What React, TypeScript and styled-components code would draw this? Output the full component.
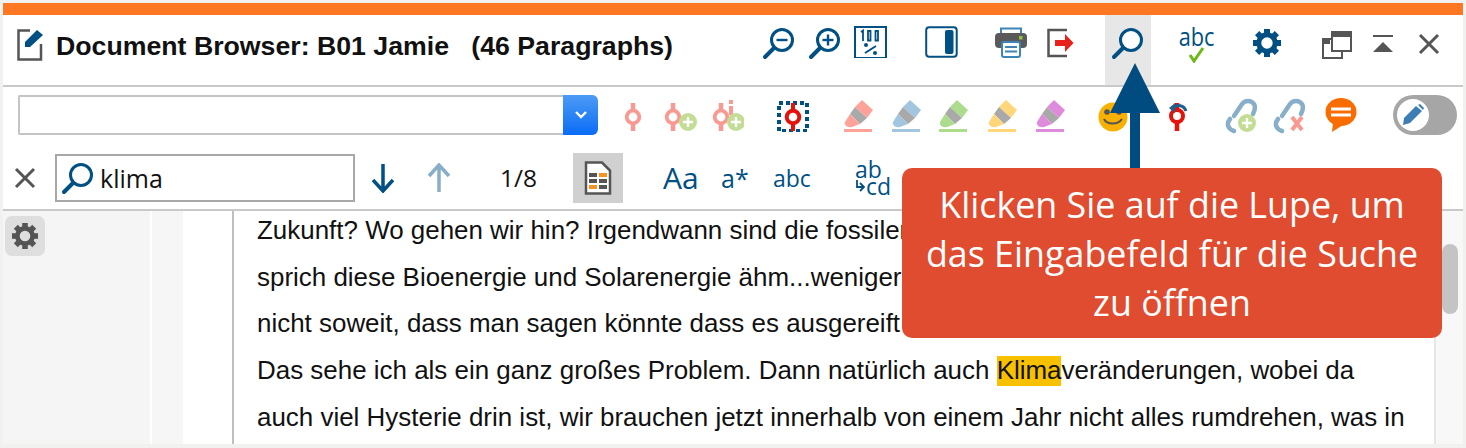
import React from "react";
import styled, { createGlobalStyle } from "styled-components";

const Global = createGlobalStyle`
  html, body { margin: 0; padding: 0; background: #f1f1f0; overflow: hidden; }
  #root { width: 1466px; height: 448px; }
  * { box-sizing: border-box; }
`;

const Page = styled.div`
  position: relative;
  width: 1466px;
  height: 448px;
  padding: 3px 3px 4px 3px;
`;
const Win = styled.div`
  height: 100%;
  display: flex;
  flex-direction: column;
  background: #fff;
`;
const Stripe = styled.div`
  height: 12px;
  flex: none;
  background: #ff7722;
`;
const TitleRow = styled.div`
  height: 70px;
  flex: none;
  display: flex;
  align-items: stretch;
`;
const DocIcon = styled.div`
  margin: 14px 0 0 14px;
  width: 26px;
  height: 34px;
`;
const Title = styled.div`
  margin: 16px 0 0 13px;
  width: 617px;
  flex: none;
  font: 700 26.7px/30px "Liberation Sans", Arial, sans-serif;
  color: #111;
  white-space: pre;
`;
const Right = styled.div`
  margin-left: 83px;
  display: flex;
`;
const Slot = styled.div<{ $w?: number; $ml?: number; $on?: string; $top?: number }>`
  width: ${(p) => p.$w ?? 46}px;
  margin-left: ${(p) => p.$ml ?? 0}px;
  flex: none;
  display: flex;
  flex-direction: column;
  align-items: center;
  padding-top: ${(p) => p.$top ?? 11}px;
  background: ${(p) => p.$on ?? "transparent"};
  height: 100%;
`;
const SpellText = styled.span`
  font: 400 25px/21px "Open Sans", sans-serif;
  color: #005083;
  transform: scaleX(0.87);
`;
const Sep = styled.div`
  height: 2px;
  flex: none;
  background: #c9c9c9;
`;
const ToolRow = styled.div`
  height: 65px;
  flex: none;
  display: flex;
  align-items: flex-start;
  padding: 8px 0 0 15px;
`;
const Combo = styled.div`
  width: 580px;
  height: 40px;
  flex: none;
  border: 2px solid #c4c4c4;
  border-right: 0;
  display: flex;
  justify-content: flex-end;
  border-radius: 2px 6px 6px 2px;
`;
const ComboBtn = styled.div`
  width: 35px;
  margin: -2px 0;
  border-radius: 0 6px 6px 0;
  background: linear-gradient(#4d9bf5, #0a6cf5);
  display: flex;
  align-items: center;
  justify-content: center;
`;
const ToolSlot = styled.div<{ $ml?: number; $w?: number }>`
  width: ${(p) => p.$w ?? 44}px;
  height: 40px;
  flex: none;
  margin-left: ${(p) => p.$ml ?? 0}px;
  display: flex;
  align-items: center;
  justify-content: center;
`;
const Toggle = styled.div`
  width: 64px;
  height: 40px;
  border-radius: 20px;
  background: #a6a6a6;
  padding: 4px;
  margin-left: 30px;
  flex: none;
`;
const Knob = styled.div`
  width: 32px;
  height: 32px;
  border-radius: 50%;
  background: #fff;
  display: flex;
  align-items: center;
  justify-content: center;
`;
const SearchRow = styled.div`
  height: 57px;
  flex: none;
  display: flex;
  align-items: center;
  padding-bottom: 5px;
`;
const CloseSlot = styled.div`
  width: 44px;
  flex: none;
  display: flex;
  justify-content: center;
`;
const SearchBox = styled.div`
  margin-left: 8px;
  width: 300px;
  height: 48px;
  flex: none;
  border: 2px solid #a8a8a8;
  display: flex;
  align-items: center;
  padding-left: 4px;
  gap: 5px;
`;
const Query = styled.span`
  font: 400 25px/1 "Open Sans", sans-serif;
  color: #111;
`;
const ArrowSlot = styled.div<{ $ml: number }>`
  margin-left: ${(p) => p.$ml}px;
  width: 28px;
  flex: none;
  display: flex;
  justify-content: center;
`;
const Count = styled.span`
  margin-left: 47px;
  width: 38px;
  flex: none;
  font: 400 24.5px/1 "Open Sans", sans-serif;
  color: #111;
`;
const DocBtn = styled.div`
  margin-left: 35px;
  width: 50px;
  height: 50px;
  flex: none;
  background: #d0d0d0;
  display: flex;
  align-items: center;
  justify-content: center;
`;
const Glyph = styled.span<{ $ml: number; $w: number; $size: number }>`
  margin-left: ${(p) => p.$ml}px;
  width: ${(p) => p.$w}px;
  flex: none;
  font: 400 ${(p) => p.$size}px/1 "Open Sans", sans-serif;
  color: #005083;
  white-space: nowrap;
`;
const Stack = styled.span`
  margin-left: 49px;
  width: 36px;
  flex: none;
  display: flex;
  flex-direction: column;
  font: 400 23px/17px "Open Sans", sans-serif;
  color: #005083;
  align-items: flex-start;
`;
const StackLow = styled.span`
  display: flex;
  align-items: center;
  gap: 1px;
`;
const Content = styled.div`
  flex: 1;
  min-height: 0;
  display: flex;
  overflow: hidden;
`;
const SideA = styled.div`
  width: 147px;
  flex: none;
  background: #f5f5f5;
  padding: 5px 0 0 2px;
`;
const GearBtn = styled.div`
  width: 40px;
  height: 40px;
  border-radius: 7px;
  background: #dedede;
  display: flex;
  align-items: center;
  justify-content: center;
`;
const SideB = styled.div`
  margin-left: 2px;
  width: 31px;
  flex: none;
  background: #f6f6f6;
`;
const Gutter = styled.div`
  margin-left: 2px;
  width: 49px;
  flex: none;
  border-right: 2px solid #bfbfbf;
`;
const Body = styled.div`
  flex: 1;
  min-width: 0;
  padding: 0 0 0 23px;
  font: 400 25.95px/46.7px "Liberation Sans", Arial, sans-serif;
  color: #111;
  overflow: hidden;
  border-right: 2px solid #e6e6e6;
  margin-top: -4px;
`;
const Line = styled.div`
  white-space: nowrap;
  overflow: hidden;
`;
const Hit = styled.mark`
  background: #f7c100;
  color: #111;
  padding-bottom: 2px;
`;
const Rail = styled.div`
  width: 27px;
  flex: none;
  background: #f8f8f8;
  padding: 33px 0 0 6px;
`;
const Thumb = styled.div`
  width: 16px;
  height: 70px;
  border-radius: 8px;
  background: #c4c4c4;
`;
const Callout = styled.div`
  position: absolute;
  left: 902px;
  top: 168px;
  width: 540px;
  height: 170px;
  border-radius: 10px;
  background: #e04c30;
  color: #fff;
  font: 400 35.85px/49px "Open Sans", sans-serif;
  text-align: center;
  padding: 12px 10px 0;
`;
const Pointer = styled.svg`
  position: absolute;
  left: 1105px;
  top: 62px;
`;

const B = "#005083";
const G = "#555";
const PINK = "#f89a92";

const Mag = ({ kind }: { kind?: "minus" | "plus" }) => (
  <svg width="34" height="34" viewBox="0 0 34 34">
    <circle cx="20" cy="14" r="10.5" fill="#fff" stroke={B} strokeWidth="3" />
    <path d="M12 22 3 31" stroke={B} strokeWidth="4" strokeLinecap="round" />
    {kind && <path d="M14.5 14h11" stroke={B} strokeWidth="2.4" />}
    {kind === "plus" && <path d="M20 8.500v11" stroke={B} strokeWidth="2.4" />}
  </svg>
);
const Sig = ({ x = 17, extra }: { x?: number; extra?: React.ReactNode }) => (
  <svg width="34" height="34" viewBox="0 0 34 34">
    <path d={`M${x} 5v28`} stroke={PINK} strokeWidth="4.500" />
    <circle cx={x} cy="19" r="6.300" fill="#fff" stroke={PINK} strokeWidth="3.800" />
    {extra}
  </svg>
);
const Plus = ({ x, y, r = 9 }: { x: number; y: number; r?: number }) => (
  <g>
    <circle cx={x} cy={y} r={r} fill="#c3dd95" />
    <path d={`M${x - 5} ${y}h10M${x} ${y - 5}v10`} stroke="#fff" strokeWidth="2.400" />
  </g>
);
const Marker = ({ c }: { c: string }) => (
  <svg width="32" height="34" viewBox="0 0 32 34">
    <path d="M20 2 31 12 25 20 13 9Z" fill={c} />
    <path d="M13 9 25 20 18 26 8 16Z" fill="#a9a9a9" />
    <path d="M8 16 18 26 10 29C5 30 2 27 3 24Z" fill={c} />
    <rect x="2" y="31" width="28" height="3" fill={c} />
  </svg>
);
const Link = ({ children }: { children: React.ReactNode }) => (
  <svg width="34" height="38" viewBox="0 0 34 38">
    <path d="M9 20 17 8C20 4 26 4 29 8 31 11 30 14 28 18" fill="none" stroke="#87afc9" strokeWidth="4.500" strokeLinecap="round" />
    <path d="M5 23C1 28 3 33 9 35" fill="none" stroke="#87afc9" strokeWidth="4.500" strokeLinecap="round" />
    {children}
  </svg>
);
const Cog = ({ c, s }: { c: string; s: number }) => (
  <svg width={s} height={s} viewBox="0 0 28 28">
    <circle cx="14" cy="14" r="8.200" fill="none" stroke={c} strokeWidth="5" />
    {[0, 45, 90, 135, 180, 225, 270, 315].map((a) => (
      <rect key={a} x="11" y="0" width="6" height="6" fill={c} transform={`rotate(${a} 14 14)`} />
    ))}
  </svg>
);
const Cross = ({ s, w }: { s: number; w: number }) => (
  <svg width={s} height={s} viewBox="0 0 22 22">
    <path d="M2 2 20 20M20 2 2 20" stroke={G} strokeWidth={w} />
  </svg>
);

export default function App() {
  return (
    <Page>
      <Global />
      <Win>
        <Stripe />
        <TitleRow>
          <DocIcon>
            <svg width="26" height="34" viewBox="0 0 26 34">
              <path d="M13 1.500H1.500V30.500H24V15" fill="none" stroke={G} strokeWidth="2.500" />
              <path d="M8 13 20 1l6 5L13 18H8Z" fill={B} />
            </svg>
          </DocIcon>
          <Title>{"Document Browser: B01 Jamie   (46 Paragraphs)"}</Title>
          <Right>
            <Slot><Mag kind="minus" /></Slot>
            <Slot><Mag kind="plus" /></Slot>
            <Slot>
              <svg width="34" height="32" viewBox="0 0 34 32">
                <rect x="1" y="1" width="31" height="31" fill="none" stroke={B} strokeWidth="2" />
                <path d="M7 6l2-1.500V15M14 5h2.500v9.500H14ZM21.500 5H24v9.500h-2.500Z" fill="none" stroke={B} strokeWidth="1.800" />
                <circle cx="12" cy="19" r="2" fill={B} /><circle cx="21" cy="27" r="2" fill={B} />
                <path d="M11 27 22 20" stroke={B} strokeWidth="2" />
              </svg>
            </Slot>
            <Slot $ml={24}>
              <svg width="33" height="32" viewBox="0 0 33 32">
                <rect x="1.200" y="1.200" width="30.500" height="29.500" rx="3" fill="#fff" stroke={B} strokeWidth="2" />
                <rect x="20" y="4" width="8.500" height="24" rx="2" fill={B} />
              </svg>
            </Slot>
            <Slot $ml={24}>
              <svg width="34" height="32" viewBox="0 0 34 32">
                <path d="M7 8V2.500h20V8" fill="none" stroke="#3d85b8" strokeWidth="2" />
                <rect x="1" y="7" width="32" height="15" rx="4" fill="#5a5a5a" />
                <rect x="25" y="10" width="3.500" height="3.500" fill="#8cc63f" />
                <rect x="8" y="16" width="18" height="15" rx="2" fill="#fff" stroke="#3d85b8" strokeWidth="2" />
                <path d="M11 21h12M11 25.500h12" stroke="#3d85b8" strokeWidth="2" />
              </svg>
            </Slot>
            <Slot $ml={4}>
              <svg width="28" height="34" viewBox="0 0 28 34">
                <path d="M20 4H1.500V30H20" fill="none" stroke={G} strokeWidth="2.500" />
                <path d="M8 14h10V8l8.500 9-8.500 9v-6H8Z" fill="#e8211a" />
              </svg>
            </Slot>
            <Slot $ml={21} $on="#e7e7e7"><Mag /></Slot>
            <Slot $ml={23}>
              <SpellText>abc</SpellText>
              <svg width="20" height="16" viewBox="0 0 20 16"><path d="M3 8l4 6L16 1" fill="none" stroke="#6cb814" strokeWidth="3" /></svg>
            </Slot>
            <Slot $ml={24} $top={14}><Cog c={B} s={28} /></Slot>
            <Slot $ml={24} $top={16}>
              <svg width="30" height="28" viewBox="0 0 30 28">
                <path d="M9 8H1v19h19v-7" fill="#fff" stroke={G} strokeWidth="2" />
                <path d="M1 8h7v5H1Z" fill={G} />
                <rect x="10" y="1" width="19" height="19" fill="#fff" stroke={G} strokeWidth="2" />
                <rect x="10" y="1" width="19" height="5" fill={G} />
              </svg>
            </Slot>
            <Slot $top={20}>
              <svg width="22" height="18" viewBox="0 0 22 18">
                <path d="M1 1h20" stroke={G} strokeWidth="2" />
                <path d="M1 17 11 7l10 10Z" fill={G} />
              </svg>
            </Slot>
            <Slot $top={18}><Cross s={22} w={3} /></Slot>
          </Right>
        </TitleRow>
        <Sep />
        <ToolRow>
          <Combo>
            <ComboBtn>
              <svg width="14" height="10" viewBox="0 0 14 10"><path d="M2 2l5 5 5-5" fill="none" stroke="#fff" strokeWidth="2.400" /></svg>
            </ComboBtn>
          </Combo>
          <ToolSlot $ml={13}><Sig /></ToolSlot>
          <ToolSlot $ml={3}><Sig x={10} extra={<Plus x={25} y={24} />} /></ToolSlot>
          <ToolSlot $ml={3}><Sig x={11} extra={<><path d="M21 2v4M21 8v9" stroke={PINK} strokeWidth="4" /><Plus x={26} y={24} /></>} /></ToolSlot>
          <ToolSlot $ml={21}>
            <svg width="34" height="34" viewBox="0 0 34 34">
              <rect x="4" y="5" width="28" height="28" fill="none" stroke={B} strokeWidth="4" strokeDasharray="4 3" />
              <path d="M18 5v28" stroke="#e3120b" strokeWidth="4" />
              <circle cx="18" cy="19" r="6.300" fill="#fff" stroke="#e3120b" strokeWidth="4" />
            </svg>
          </ToolSlot>
          <ToolSlot $ml={22}><Marker c="#ffa399" /></ToolSlot>
          <ToolSlot $ml={4}><Marker c="#a3c6e0" /></ToolSlot>
          <ToolSlot $ml={3}><Marker c="#acdc8c" /></ToolSlot>
          <ToolSlot $ml={5}><Marker c="#ffd77a" /></ToolSlot>
          <ToolSlot $ml={4}><Marker c="#df8bdc" /></ToolSlot>
          <ToolSlot $ml={19}>
            <svg width="34" height="38" viewBox="0 0 34 38">
              <circle cx="17" cy="21" r="14.500" fill="#f8b100" />
              <circle cx="11" cy="16" r="2.800" fill="#555" /><circle cx="23" cy="16" r="2.800" fill="#555" />
              <path d="M8 23c3 6 14 6 18 0" fill="none" stroke="#555" strokeWidth="2" />
            </svg>
          </ToolSlot>
          <ToolSlot $ml={20}>
            <svg width="30" height="38" viewBox="0 0 30 38">
              <path d="M15 7v28" stroke="#e3120b" strokeWidth="4.500" />
              <circle cx="15" cy="20" r="6" fill="#fff" stroke="#e3120b" strokeWidth="4" />
              <path d="M11 12C15 8 22 9 24 15" fill="none" stroke="#1d5f8f" strokeWidth="3" />
              <path d="M7 12l6-5v10Z" fill="#1d5f8f" />
            </svg>
          </ToolSlot>
          <ToolSlot $ml={21}><Link><Plus x={22} y={27} r={9} /></Link></ToolSlot>
          <ToolSlot $ml={4}>
            <Link><path d="M19 21 29 34M29 21 19 34" stroke={PINK} strokeWidth="4" /></Link>
          </ToolSlot>
          <ToolSlot $ml={7}>
            <svg width="32" height="36" viewBox="0 0 32 36">
              <ellipse cx="16" cy="15" rx="15.500" ry="14" fill="#f96c00" />
              <path d="M8 26 7 35l11-7Z" fill="#f96c00" />
              <path d="M6 12h20M6 18h20" stroke="#fff" strokeWidth="3" />
            </svg>
          </ToolSlot>
          <Toggle>
            <Knob>
              <svg width="24" height="24" viewBox="0 0 24 24">
                <path d="M2 22 3 15 15 3l6 5L9 20Z" fill="#3d7fb5" />
                <path d="M17 2l2-1 4 4-1 2Z" fill="#3d7fb5" />
              </svg>
            </Knob>
          </Toggle>
        </ToolRow>
        <SearchRow>
          <CloseSlot><Cross s={22} w={3} /></CloseSlot>
          <SearchBox>
            <Mag />
            <Query>klima</Query>
          </SearchBox>
          <ArrowSlot $ml={14}>
            <svg width="24" height="30" viewBox="0 0 24 30"><path d="M12 1v27M2 17l10 11 10-11" fill="none" stroke={B} strokeWidth="3.500" /></svg>
          </ArrowSlot>
          <ArrowSlot $ml={28}>
            <svg width="24" height="30" viewBox="0 0 24 30"><path d="M12 29V2M2 13 12 2l10 11" fill="none" stroke="#88aec8" strokeWidth="3.500" /></svg>
          </ArrowSlot>
          <Count>1/8</Count>
          <DocBtn>
            <svg width="28" height="34" viewBox="0 0 28 34">
              <path d="M2 1.500h16l8 8v23H2Z" fill="#fff" stroke={G} strokeWidth="2.500" />
              <rect x="5" y="12" width="8" height="4" fill={G} /><rect x="15" y="12" width="8" height="4" fill="#f7931e" />
              <rect x="5" y="18" width="8" height="4" fill={G} /><rect x="15" y="18" width="8" height="4" fill={G} />
              <rect x="5" y="24" width="8" height="4" fill="#f7931e" /><rect x="15" y="24" width="8" height="4" fill={G} />
            </svg>
          </DocBtn>
          <Glyph $ml={40} $w={58} $size={30}>Aa</Glyph>
          <Glyph $ml={0} $w={52} $size={25}>a*</Glyph>
          <Glyph $ml={0} $w={33} $size={23}>abc</Glyph>
          <Stack>
            <span>ab</span>
            <StackLow>
              <svg width="10" height="13" viewBox="0 0 10 13"><path d="M2 0v7h7M5 3 9 7l-4 4" fill="none" stroke={B} strokeWidth="1.800" /></svg>
              cd
            </StackLow>
          </Stack>
        </SearchRow>
        <Sep />
        <Content>
          <SideA>
            <GearBtn><Cog c={G} s={26} /></GearBtn>
          </SideA>
          <SideB />
          <Gutter />
          <Body>
            <Line>Zukunft? Wo gehen wir hin? Irgendwann sind die fossilen Energien zu Ende und alternative Energien,</Line>
            <Line>sprich diese Bioenergie und Solarenergie ähm...weniger ausgereift sind, das ist einfach noch</Line>
            <Line>nicht soweit, dass man sagen könnte dass es ausgereift wäre, das ist noch nicht so weit.</Line>
            <Line>Das sehe ich als ein ganz großes Problem. Dann natürlich auch <Hit>Klima</Hit>veränderungen, wobei da</Line>
            <Line>auch viel Hysterie drin ist, wir brauchen jetzt innerhalb von einem Jahr nicht alles rumdrehen, was in</Line>
          </Body>
          <Rail><Thumb /></Rail>
        </Content>
      </Win>
      <Pointer width="60" height="110" viewBox="0 0 60 110">
        <path d="M30 1 55 51H35v57H25V51H5Z" fill="#004b80" />
      </Pointer>
      <Callout>
        Klicken Sie auf die Lupe, um das Eingabefeld für die Suche zu öffnen
      </Callout>
    </Page>
  );
}
